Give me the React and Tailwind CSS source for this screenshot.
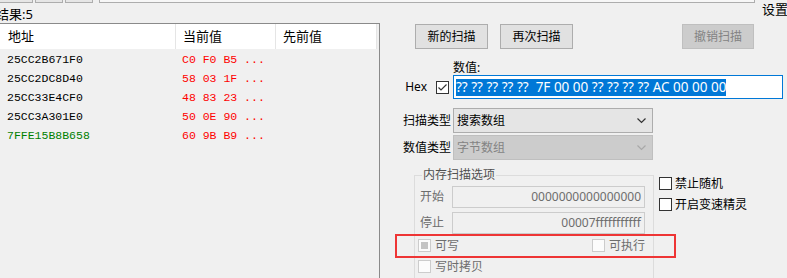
import React from "react";

const rows = [
  { addr: "25CC2B671F0", val: "C0 F0 B5 ...", green: false },
  { addr: "25CC2DC8D40", val: "58 03 1F ...", green: false },
  { addr: "25CC33E4CF0", val: "48 83 23 ...", green: false },
  { addr: "25CC3A301E0", val: "50 0E 90 ...", green: false },
  { addr: "7FFE15B8B658", val: "60 9B B9 ...", green: true },
];

function Check({ checked = false, grayed = false, disabled = false }) {
  return (
    <div
      className={
        disabled
          ? "w-[13px] h-[13px] shrink-0 border border-[#cccccc] bg-[#fcfcfc] flex items-center justify-center"
          : "w-[13px] h-[13px] shrink-0 border border-[#333333] bg-white flex items-center justify-center"
      }
    >
      {grayed && <div className="w-[7px] h-[7px] bg-[#c4c4c4]" />}
      {checked && (
        <svg width="11" height="11" viewBox="0 0 11 11">
          <path d="M1.5 5.5 L4 8 L9.5 2.5" fill="none" stroke="#333333" strokeWidth="1.2" />
        </svg>
      )}
    </div>
  );
}

function Chevron({ color }) {
  return (
    <svg width="9" height="6" viewBox="0 0 9 6">
      <path d="M0.5 0.5 L4.5 4.5 L8.5 0.5" fill="none" stroke={color} strokeWidth="1.2" />
    </svg>
  );
}

const App = () => {
  return (
    <div className="w-[787px] h-[278px] overflow-hidden bg-[#f0f0f0] relative flex flex-col font-['Noto_Sans','Noto_Sans_CJK_SC',sans-serif] text-[12px] text-black">
      {/* tab strip */}
      <div className="flex h-[3px] shrink-0">
        <div className="w-[33px] border-r border-b border-[#adadad] bg-[#e6e6e6]" />
        <div className="ml-[2px] w-[28px] border-x border-b border-[#adadad] bg-[#e6e6e6]" />
        <div className="ml-[2px] w-[28px] border-x border-b border-[#adadad] bg-[#e6e6e6]" />
        <div className="ml-[6px] w-[656px] border-x border-b border-[#adadad] bg-[#f7f7f7]" />
      </div>

      <div className="flex flex-1 min-h-0">
        {/* result list */}
        <div className="w-[380px] shrink-0 flex flex-col">
          <div className="h-[20px] shrink-0 pt-[2px] leading-[18px] text-[13px] -ml-[4px] whitespace-nowrap">结果:5</div>
          <div className="flex-1 border-t border-r border-[#8a8a8a]">
            <div className="flex h-[25px] text-[13px] leading-[25px]">
              <div className="w-[176px] bg-white border-r border-[#e5e5e5] pl-[8px]">地址</div>
              <div className="w-[100px] bg-white border-r border-[#e5e5e5] pl-[7px]">当前值</div>
              <div className="w-[101px] bg-white border-r border-[#e5e5e5] pl-[7px]">先前值</div>
            </div>
            <div className="pt-[1px] font-['Liberation_Mono',monospace] text-[11.5px]">
              {rows.map((r) => (
                <div key={r.addr} className="flex h-[19px] items-center whitespace-pre">
                  <div className={r.green ? "w-[176px] pl-[7px] text-[#008000]" : "w-[176px] pl-[7px] text-black"}>
                    {r.addr}
                  </div>
                  <div className="w-[100px] pl-[6px] text-[#ff0000]">{r.val}</div>
                </div>
              ))}
            </div>
          </div>
        </div>

        {/* scan panel */}
        <div className="flex-1 flex flex-col">
          <div className="h-[21px] shrink-0 flex justify-end text-[13px] leading-[13px] -mr-[1px]">设置</div>

          <div className="h-[25px] shrink-0 flex pl-[35px]">
            <div className="w-[73px] border border-[#adadad] bg-[#e1e1e1] flex items-center justify-center">新的扫描</div>
            <div className="ml-[12px] w-[73px] border border-[#adadad] bg-[#e1e1e1] flex items-center justify-center">再次扫描</div>
            <div className="ml-[109px] w-[72px] border border-[#bfbfbf] bg-[#cccccc] text-[#838383] flex items-center justify-center">撤销扫描</div>
          </div>

          <div className="h-[26px] shrink-0 pl-[73px] pt-[12px] leading-[13px]">数值:</div>

          <div className="h-[24px] shrink-0 flex">
            <div className="w-[73px] flex items-center justify-end pr-[4px]">
              <span>Hex</span>
              <div className="ml-[9px]">
                <Check checked />
              </div>
            </div>
            <div className="w-[330px] border border-[#0078d7] bg-white flex items-center pl-[2px]">
              <span className="bg-[#0078d7] text-white text-[13.5px] leading-[17px] whitespace-pre">
                ?? ?? ?? ?? ??  7F 00 00 ?? ?? ?? ?? AC 00 00 00
              </span>
            </div>
          </div>

          <div className="mt-[9px] h-[25px] shrink-0 flex">
            <div className="w-[73px] text-right pr-[2px] leading-[25px]">扫描类型</div>
            <div className="w-[200px] border border-[#adadad] bg-[#e5e5e5] flex items-center justify-between pl-[3px] pr-[6px]">
              <span>搜索数组</span>
              <Chevron color="#333333" />
            </div>
          </div>

          <div className="mt-[2px] h-[25px] shrink-0 flex">
            <div className="w-[73px] text-right pr-[2px] leading-[25px]">数值类型</div>
            <div className="w-[200px] border border-[#bfbfbf] bg-[#cccccc] text-[#838383] flex items-center justify-between pl-[3px] pr-[6px]">
              <span>字节数组</span>
              <Chevron color="#a8a8a8" />
            </div>
          </div>

          <div className="mt-[8px] shrink-0 flex pl-[34px]">
            <fieldset className="w-[240px] border border-[#dcdcdc] pl-[3px] pr-[7px] pb-[4px]">
              <legend className="ml-[4px] px-[1px] leading-[14px] text-[#505050]">内存扫描选项</legend>
              <div className="mt-[4px] flex h-[22px] items-center">
                <div className="w-[34px] pl-[2px] text-[#6d6d6d]">开始</div>
                <div className="w-[193px] h-[22px] border border-[#cccccc] bg-[#f0f0f0] text-right pr-[3px] leading-[20px] text-[#6d6d6d]">
                  0000000000000000
                </div>
              </div>
              <div className="mt-[4px] flex h-[22px] items-center">
                <div className="w-[34px] pl-[2px] text-[#6d6d6d]">停止</div>
                <div className="w-[193px] h-[22px] border border-[#cccccc] bg-[#f0f0f0] text-right pr-[3px] leading-[20px] text-[#6d6d6d]">
                  00007fffffffffff
                </div>
              </div>
              <div className="mt-[1px] h-[21px] flex items-center text-[#6d6d6d]">
                <div className="w-[174px] flex items-center gap-[4px]">
                  <Check disabled grayed />
                  <span>可写</span>
                </div>
                <div className="flex items-center gap-[4px]">
                  <Check disabled />
                  <span>可执行</span>
                </div>
              </div>
              <div className="h-[21px] flex items-center gap-[4px] text-[#6d6d6d]">
                <Check disabled />
                <span>写时拷贝</span>
              </div>
            </fieldset>

            <div className="ml-[5px] pt-[5px] flex flex-col">
              <div className="h-[21px] flex items-center gap-[3px]">
                <Check />
                <span>禁止随机</span>
              </div>
              <div className="h-[21px] flex items-center gap-[3px]">
                <Check />
                <span>开启变速精灵</span>
              </div>
            </div>
          </div>
        </div>
      </div>

      {/* highlight annotation */}
      <div className="absolute left-[395px] top-[234px] w-[281px] h-[24px] border-2 border-[#ee3535]" />
    </div>
  );
};

export default App;
